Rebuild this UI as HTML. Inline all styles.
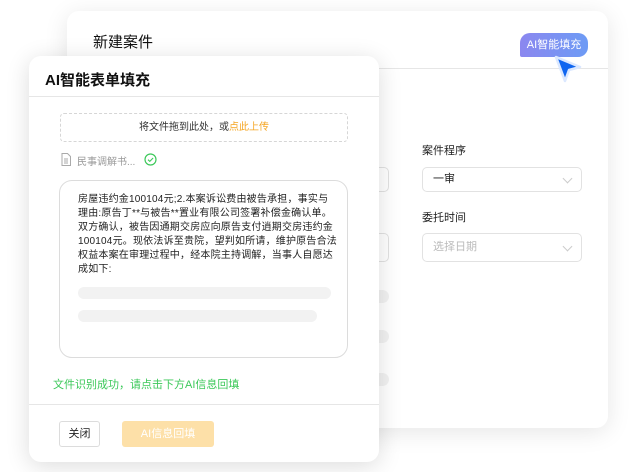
<!DOCTYPE html>
<html><head><meta charset="utf-8"><style>
*{margin:0;padding:0;box-sizing:border-box}
body{width:638px;height:472px;background:#fff;position:relative;overflow:hidden;font-family:"Liberation Sans","Noto Sans CJK SC",sans-serif;color:#222}
.abs{position:absolute}
.back{left:67px;top:11px;width:541px;height:417px;background:#fff;border-radius:12px;box-shadow:0 4px 24px rgba(0,0,0,.10)}
.front{left:29px;top:56px;width:350px;height:406px;background:#fff;border-radius:12px;box-shadow:0 4px 24px rgba(0,0,0,.14)}
.inp{border:1px solid #e2e2e2;border-radius:5px;background:#fff}
.bar{background:#f2f2f2;border-radius:7px}
.chev{position:absolute;right:10px;top:7px;width:7px;height:7px;border-right:1px solid #ccc;border-bottom:1px solid #ccc;transform:rotate(45deg)}
</style></head><body>
<div class="abs back"></div>
<div class="abs" style="left:93px;top:31px;font-size:15px;color:#111">新建案件</div>
<div class="abs" style="left:67px;top:68px;width:541px;height:1px;background:#e6e6e6"></div>
<div class="abs" style="left:520px;top:33px;width:68px;height:24px;border-radius:10px 10px 10px 2px;background:linear-gradient(90deg,#8b87ef,#6d9bf5);color:#fff;font-size:11px;line-height:24px;text-align:center">AI智能填充</div>
<svg class="abs" style="left:550px;top:52px" width="36" height="36" viewBox="0 0 36 36"><path d="M6 5 L30 15 L19 18 L15 29 Z" fill="#1066f0" stroke="#dbe8ff" stroke-width="2.5" stroke-linejoin="round"/></svg>

<div class="abs" style="left:422px;top:142px;font-size:11px">案件程序</div>
<div class="abs inp" style="left:422px;top:167px;width:160px;height:25px;font-size:11px;line-height:23px;padding-left:10px">一审<span class="chev"></span></div>
<div class="abs" style="left:422px;top:209px;font-size:11px">委托时间</div>
<div class="abs inp" style="left:422px;top:233px;width:160px;height:29px;font-size:11px;line-height:27px;padding-left:10px;color:#bbb">选择日期<span class="chev" style="top:9px"></span></div>
<div class="abs inp" style="left:360px;top:167px;width:29px;height:25px"></div>
<div class="abs inp" style="left:360px;top:233px;width:29px;height:29px"></div>
<div class="abs bar" style="left:360px;top:290px;width:29px;height:13px"></div>
<div class="abs bar" style="left:360px;top:330px;width:29px;height:13px"></div>
<div class="abs bar" style="left:360px;top:373px;width:29px;height:13px"></div>

<div class="abs front"></div>
<div class="abs" style="left:45px;top:69px;font-size:15px;font-weight:bold;color:#111">AI智能表单填充</div>
<div class="abs" style="left:29px;top:96px;width:350px;height:1px;background:#e6e6e6"></div>
<div class="abs" style="left:60px;top:113px;width:288px;height:29px;border:1px dashed #d6d6d6;border-radius:4px;font-size:10px;line-height:27px;text-align:center;color:#333">将文件拖到此处，或<span style="color:#f5a623">点此上传</span></div>
<svg class="abs" style="left:61px;top:153px" width="10" height="13" viewBox="0 0 10 13"><path d="M1 .5h5.5L9.5 3.5V12.5H1Z M3 6h4 M3 8h4 M3 10h4" fill="none" stroke="#aaa" stroke-width="1"/></svg>
<div class="abs" style="left:77px;top:153px;font-size:10px;color:#999">民事调解书...</div>
<svg class="abs" style="left:144px;top:153px" width="13" height="13" viewBox="0 0 13 13"><circle cx="6.5" cy="6.5" r="5.5" fill="none" stroke="#3cc85a" stroke-width="1.2"/><path d="M4 6.7l1.8 1.7 3.3-3.4" fill="none" stroke="#3cc85a" stroke-width="1.1"/></svg>
<div class="abs" style="left:59px;top:180px;width:289px;height:178px;border:1px solid #dcdcdc;border-radius:13px"></div>
<div class="abs" style="left:78px;top:193px;width:265px;white-space:nowrap;font-size:10px;line-height:14px;color:#222;letter-spacing:.2px">房屋违约金100104元;2.本案诉讼费由被告承担，事实与<br>理由:原告丁**与被告**置业有限公司签署补偿金确认单。<br>双方确认，被告因通期交房应向原告支付逍期交房违约金<br>100104元。现依法诉至贵院，望判如所请，维护原告合法<br>权益本案在审理过程中，经本院主持调解，当事人自愿达<br>成如下:</div>
<div class="abs bar" style="left:78px;top:287px;width:253px;height:12px;border-radius:6px"></div>
<div class="abs bar" style="left:78px;top:310px;width:239px;height:12px;border-radius:6px"></div>
<div class="abs" style="left:53px;top:376px;font-size:11px;color:#3cc85a">文件识别成功，请点击下方AI信息回填</div>
<div class="abs" style="left:29px;top:404px;width:350px;height:1px;background:#e6e6e6"></div>
<div class="abs" style="left:59px;top:421px;width:41px;height:26px;border:1px solid #dcdcdc;border-radius:3px;font-size:11px;line-height:24px;text-align:center">关闭</div>
<div class="abs" style="left:122px;top:421px;width:92px;height:26px;background:#fde0a8;border-radius:3px;font-size:11px;line-height:26px;text-align:center;color:#fff">AI信息回填</div>
</body></html>
